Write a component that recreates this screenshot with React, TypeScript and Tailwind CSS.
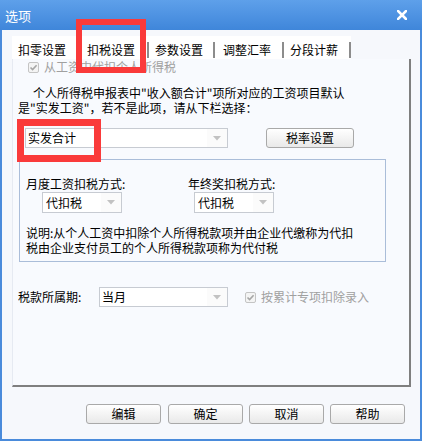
import React from "react";

function Check() {
  return (
    <span className="w-[11px] h-[11px] border border-[#c4c4c4] bg-[#f4f4f4] rounded-[2px] flex items-center justify-center shrink-0">
      <svg width="9" height="9" viewBox="0 0 9 9">
        <path d="M1.5 4.5 L3.6 6.6 L7.6 2.2" stroke="#a6a6a6" strokeWidth="1.6" fill="none" />
      </svg>
    </span>
  );
}

function Arrow() {
  return (
    <span className="w-[20px] h-full flex items-center justify-center bg-[#fbfbfb]">
      <svg width="8" height="5" viewBox="0 0 8 5">
        <path d="M0 0 L8 0 L4 4.5 Z" fill="#c2c2c2" />
      </svg>
    </span>
  );
}

function Btn({ label, className }: { label: string; className: string }) {
  return (
    <div
      className={
        "border border-[#a9a9a9] rounded-[3px] bg-gradient-to-b from-[#ffffff] to-[#e9e9e9] flex items-center justify-center text-[12px] text-black leading-none " +
        className
      }
    >
      {label}
    </div>
  );
}

function Sep() {
  return <div className="w-[2px] h-[16px] self-end mb-[1px] bg-[#8c8c8c] shrink-0" />;
}

export default function App() {
  return (
    <div className="relative w-[422px] h-[441px] bg-[#4a8bdb] flex flex-col font-['Noto_Sans_CJK_SC','Noto_Sans',sans-serif] text-[12px] text-black">
      {/* title bar */}
      <div className="h-[30px] shrink-0 bg-gradient-to-b from-[#5ea0ea] to-[#3f86da] flex items-center justify-between pl-[5px] pr-[15px]">
        <span className="text-white text-[13px] leading-none">选项</span>
        <svg width="10" height="10" viewBox="0 0 10 10">
          <path d="M1 1 L9 9 M9 1 L1 9" stroke="#ffffff" strokeWidth="2.6" strokeLinecap="square" />
        </svg>
      </div>

      {/* client */}
      <div className="flex-1 mx-[2px] mb-[2px] bg-[#f6f8fc] flex flex-col">
        {/* tabs */}
        <div className="mt-[6px] ml-[10px] h-[23px] flex w-[339px] bg-white">
          <div className="w-[65px] flex items-center pt-[5px] pl-[6px] leading-none">扣零设置</div>
          <div className="w-[70px] flex items-center pt-[5px] pl-[10px] leading-none">扣税设置</div>
          <Sep />
          <div className="w-[64px] flex items-center pt-[5px] pl-[6px] leading-none">参数设置</div>
          <Sep />
          <div className="w-[67px] flex items-center pt-[5px] pl-[8px] leading-none">调整汇率</div>
          <Sep />
          <div className="w-[65px] flex items-center pt-[5px] pl-[6px] leading-none">分段计薪</div>
          <Sep />
        </div>

        {/* panel */}
        <div className="ml-[10px] w-[399px] h-[328px] bg-[#f8fafe] border-r-2 border-b-2 border-[#7f7f7f] border-l border-l-[#e6eaf2] flex flex-col">
          <div className="h-[16px] flex items-center pl-[15px] gap-[5px] text-[#a0a0a0]">
            <Check />
            <span className="leading-none">从工资中代扣个人所得税</span>
          </div>

          <div className="mt-[10px] pl-[5px] leading-[15px]">
            <div className="pl-[15px]">个人所得税申报表中"收入额合计"项所对应的工资项目默认</div>
            <div>是"实发工资"，若不是此项，请从下栏选择：</div>
          </div>

          <div className="mt-[13px] h-[20px] flex items-center pl-[12px]">
            <div className="w-[203px] h-[20px] border border-[#c7cbd2] bg-white flex items-center justify-between">
              <span className="pl-[2px] leading-none">实发合计</span>
              <Arrow />
            </div>
            <Btn label="税率设置" className="ml-[38px] w-[88px] h-[20px]" />
          </div>

          <div className="mt-[11px] ml-[6px] w-[367px] h-[103px] border border-[#aabdd9] flex flex-col">
            <div className="mt-[16px] flex leading-[15px]">
              <div className="w-[168px] pl-[6px]">月度工资扣税方式:</div>
              <div>年终奖扣税方式:</div>
            </div>
            <div className="mt-[1px] flex">
              <div className="ml-[22px] w-[80px] h-[21px] border border-[#c7cbd2] bg-white flex items-center justify-between">
                <span className="pl-[3px] leading-none">代扣税</span>
                <Arrow />
              </div>
              <div className="ml-[72px] w-[80px] h-[21px] border border-[#c7cbd2] bg-white flex items-center justify-between">
                <span className="pl-[3px] leading-none">代扣税</span>
                <Arrow />
              </div>
            </div>
            <div className="mt-[12px] pl-[6px] leading-[15px]">
              <div>说明:从个人工资中扣除个人所得税款项并由企业代缴称为代扣</div>
              <div>税由企业支付员工的个人所得税款项称为代付税</div>
            </div>
          </div>

          <div className="mt-[25px] h-[20px] flex items-center pl-[5px]">
            <span className="w-[81px] leading-none">税款所属期:</span>
            <div className="w-[129px] h-[20px] border border-[#c7cbd2] bg-white flex items-center justify-between">
              <span className="pl-[2px] leading-none">当月</span>
              <Arrow />
            </div>
            <div className="ml-[17px] flex items-center gap-[5px] text-[#a0a0a0]">
              <Check />
              <span className="leading-none">按累计专项扣除录入</span>
            </div>
          </div>
        </div>

        {/* buttons */}
        <div className="mt-[17px] flex justify-end pr-[15px]">
          <Btn label="编辑" className="w-[75px] h-[20px]" />
          <Btn label="确定" className="ml-[7px] w-[75px] h-[20px]" />
          <Btn label="取消" className="ml-[6px] w-[75px] h-[20px]" />
          <Btn label="帮助" className="ml-[6px] w-[75px] h-[20px]" />
        </div>
      </div>

      {/* red annotation boxes */}
      <div className="absolute left-[76px] top-[19px] w-[70px] h-[54px] border-[6px] border-[#fa3a3a]" />
      <div className="absolute left-[17px] top-[119px] w-[84px] h-[43px] border-[7px] border-[#fa3a3a]" />
    </div>
  );
}
